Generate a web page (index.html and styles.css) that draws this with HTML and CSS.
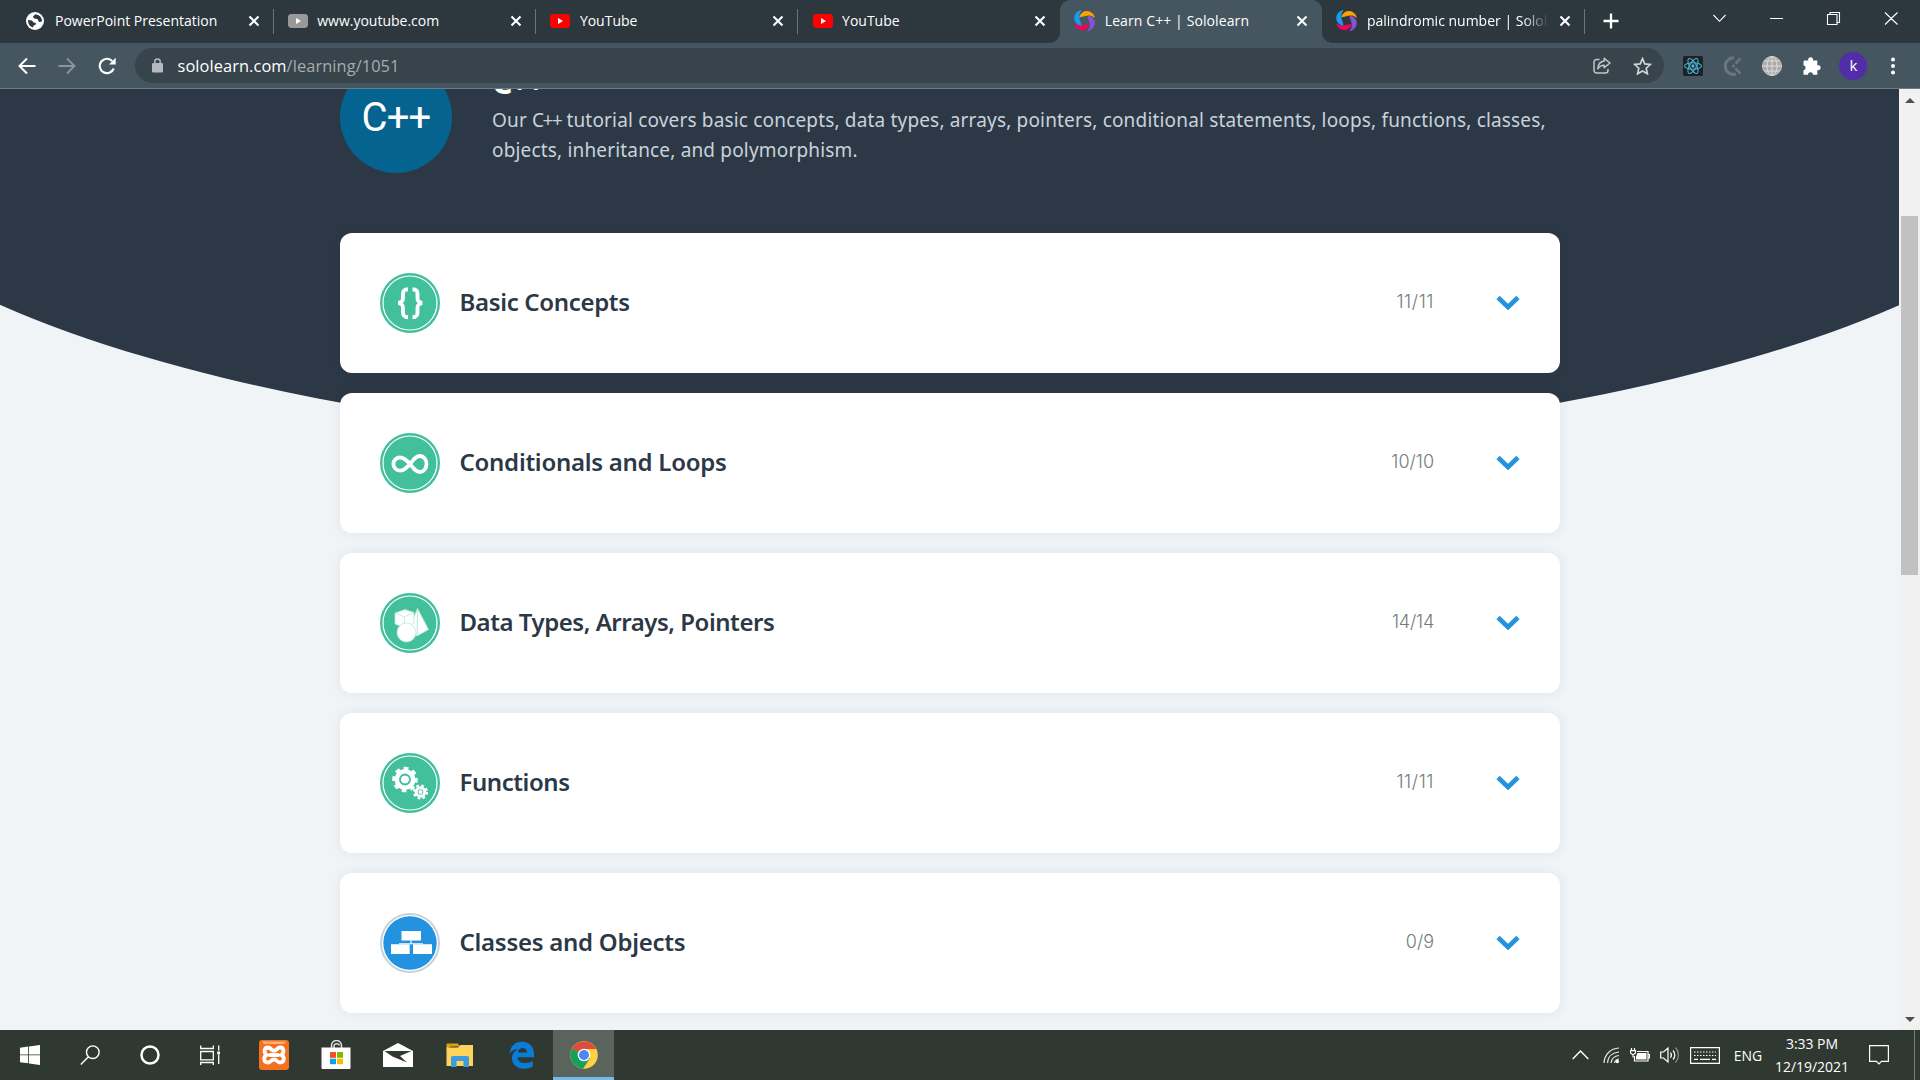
FILE: index.html
```html
<!DOCTYPE html>
<html lang="en">
<head>
<meta charset="utf-8">
<title>Learn C++ | Sololearn</title>
<link rel="stylesheet" href="styles.css">
</head>
<body>
<svg width="0" height="0" class="defs">
  <symbol id="close" viewBox="0 0 12 12"><path d="M1.5 1.5l9 9M10.5 1.5l-9 9" stroke="#fff" stroke-width="2.1" fill="none"/></symbol>
  <symbol id="yt" viewBox="0 0 20 14"><rect width="20" height="14" rx="3.4" fill="currentColor"/><path d="M8 4l5 3-5 3z" fill="#fff"/></symbol>
  <symbol id="solo" viewBox="0 0 22 22">
    <path d="M6 7.2C7.8 2 12.500 .4 17 2.300c2.200 1 3.700 3 4.200 5.300-2.500-2.200-5.200-2.600-8-2-2.600.4-4.200 1-7.200 1.600z" fill="#ffa200" stroke="#ffa200"/>
    <path d="M14.800 6.300C20.300 7.500 22.200 12 20.800 16.300c-.9 2.800-3 4.700-6 5.200 2.400-2.500 2.600-5.200 2-8-.5-2.700-1.800-4-2-7.200z" fill="#8553d9" stroke="#8553d9"/>
    <path d="M15.900 15.100C14.100 20.200 9.500 21.800 5 19.700 2.800 18.700 1.400 17 .8 14.600c2.500 2 5.200 2.500 8 1.900 2.600-.5 4.200-1 7.100-1.400z" fill="#f7005c" stroke="#f7005c"/>
    <path d="M7.200 16C1.700 14.700-.2 10.200 1.200 5.800 2.100 3 4.200 1 7.300.7 5 3.200 4.700 5.900 5.200 8.600c.5 2.700 1.800 4.200 2 7.400z" fill="#149ef2" stroke="#149ef2"/>
  </symbol>
  <symbol id="chev" viewBox="0 0 24 16"><path d="M2 2.500l10 9.500L22 2.500" stroke="#2493df" stroke-width="4.600" fill="none"/></symbol>
  <symbol id="ring" viewBox="0 0 60 60"><circle cx="30" cy="30" r="30" fill="#42bf9b"/><circle cx="30" cy="30" r="27" fill="none" stroke="#fff" stroke-width="1.200"/></symbol>
</svg>

<header class="tabs">
  <div class="tab">
    <svg class="fav" width="18" height="18" viewBox="0 0 18 18"><circle cx="9" cy="9" r="9" fill="#fff"/><path d="M9.500 2.200L7 4.500l1 2 3.500.5 1.500 3 3-.5a7 7 0 0 0-6.500-7.300zM2 8l4 .4 1.500 2.100 2.500.5-.6 2-1.900.4-.5 2.200A7 7 0 0 1 2 8z" fill="#2d373e"/></svg>
    <span class="name">PowerPoint Presentation</span><svg class="x" width="12" height="12"><use href="#close"/></svg>
  </div>
  <div class="tab"><svg class="fav gray" width="20" height="14"><use href="#yt"/></svg><span class="name">www.youtube.com</span><svg class="x" width="12" height="12"><use href="#close"/></svg></div>
  <div class="tab"><svg class="fav red" width="20" height="14"><use href="#yt"/></svg><span class="name">YouTube</span><svg class="x" width="12" height="12"><use href="#close"/></svg></div>
  <div class="tab last"><svg class="fav red" width="20" height="14"><use href="#yt"/></svg><span class="name">YouTube</span><svg class="x" width="12" height="12"><use href="#close"/></svg></div>
  <div class="tab active"><svg class="fav solo" width="21" height="21"><use href="#solo"/></svg><span class="name learn">Learn C++ | Sololearn</span><svg class="x" width="12" height="12"><use href="#close"/></svg></div>
  <div class="tab"><svg class="fav solo" width="21" height="21"><use href="#solo"/></svg><span class="name fade">palindromic number | Sololearn</span><svg class="x" width="12" height="12"><use href="#close"/></svg></div>
  <svg class="plus" width="16" height="16" viewBox="0 0 16 16"><path d="M8 .5v15M.5 8h15" stroke="#fff" stroke-width="2.300"/></svg>
  <svg class="window" width="190" height="20" viewBox="0 0 190 20" fill="none" stroke="#fff" stroke-width="1.100"><path d="M1.500 7l6 6.300 6-6.300M58 10.500h13"/><path d="M115.500 6.500h9.500v10h-9.500zM118 6.500v-2h9.500v10H125M173 4.500l12.500 12M185.500 4.500l-12.500 12"/></svg>
</header>

<nav class="toolbar">
  <svg width="18" height="18" viewBox="0 0 18 18" fill="none" stroke="#fff" stroke-width="2"><path d="M17.500 9H2M9 1.500L1.500 9 9 16.500"/></svg>
  <svg class="fwd" width="18" height="18" viewBox="0 0 18 18" fill="none" stroke="#8b969c" stroke-width="1.800"><path d="M.5 9H16M9 1.500L16.500 9 9 16.500"/></svg>
  <svg class="reload" width="18" height="18" viewBox="0 0 18 18"><path d="M15.700 11.500A7.200 7.200 0 1 1 14.200 4" stroke="#fff" stroke-width="2.200" fill="none"/><path d="M17.700.8V7.500H11z" fill="#fff"/></svg>
  <div class="omnibox">
    <svg width="11" height="15" viewBox="0 0 11 15"><rect y="5" width="11" height="9.500" rx="1.300" fill="#b5babe"/><path d="M2.800 6V3.700a2.700 2.700 0 0 1 5.400 0V6" stroke="#b5babe" stroke-width="1.500" fill="none"/></svg>
    <span class="url">sololearn.com<span class="path">/learning/1051</span></span>
    <svg width="18" height="17" viewBox="0 0 18 17" fill="none" stroke="#c0c5c8" stroke-width="1.500"><path d="M6.500 2.500H3.500a2.500 2.500 0 0 0-2.500 2.500v8.500A2.500 2.500 0 0 0 3.500 16h9a2.500 2.500 0 0 0 2.500-2.500V12"/><path d="M11.200 1.300L17 6l-5.800 4.700V8.200C8 8.200 6.200 9.500 4.800 11.800 5 7.500 7.500 4.500 11.200 4z" stroke-linejoin="round"/></svg>
    <svg class="star" width="19" height="18" viewBox="0 0 19 18"><path d="M9.500 1.700l2.300 5.200 5.600.5-4.200 3.800 1.200 5.600-4.900-2.900-4.900 2.900 1.200-5.600L1.600 7.400l5.600-.5z" fill="none" stroke="#d0d4d6" stroke-width="1.700"/></svg>
  </div>
  <div class="exts">
    <svg width="20" height="20" viewBox="0 0 20 20"><rect width="20" height="20" rx="1.500" fill="#202124"/><g fill="none" stroke="#48b5d8" stroke-width="1.100"><ellipse cx="10" cy="10" rx="8.500" ry="3.300"/><ellipse cx="10" cy="10" rx="8.500" ry="3.300" transform="rotate(60 10 10)"/><ellipse cx="10" cy="10" rx="8.500" ry="3.300" transform="rotate(120 10 10)"/></g><circle cx="10" cy="10" r="1.700" fill="#48b5d8"/></svg>
    <svg width="18" height="20" viewBox="0 0 18 20" fill="none" stroke="#697880" stroke-width="3"><path d="M10 1.800a8.300 8.300 0 1 0 2 16.200"/><path d="M16.500 2.500l-5 5M11.500 12.500l5 5" stroke-width="2.500"/><circle cx="9.500" cy="10" r="1.500" fill="#697880" stroke="none"/></svg>
    <svg width="20" height="20" viewBox="0 0 20 20"><circle cx="10" cy="10" r="9.500" fill="#aaa" stroke="#c8c8c8"/><path d="M10 .5v19M.5 10h19M2.500 5h15M2.500 15h15" stroke="#ddd" fill="none"/><ellipse cx="10" cy="10" rx="5" ry="9.500" stroke="#ddd" fill="none"/></svg>
    <svg width="18" height="18" viewBox="0 0 18 18"><path d="M1.800 3.500H5.200a2.500 2.500 0 1 1 4.800 0h4.300v4.800a2.500 2.500 0 1 1 0 4.700v4.700H10a2.500 2.500 0 0 0-5 0H.5v-4.400a2.600 2.600 0 0 0 0-5.100V4.800c0-.8.500-1.300 1.300-1.300z" fill="#fff"/></svg>
    <span class="avatar">k</span>
    <svg width="4" height="18" viewBox="0 0 4 18" fill="#fff"><circle cx="2" cy="2.500" r="2"/><circle cx="2" cy="9" r="2"/><circle cx="2" cy="15.500" r="2"/></svg>
  </div>
</nav>

<div class="view">
  <main class="page">
    <div class="dome"></div>
    <section class="course">
      <div class="logo">C++</div>
      <div class="about">
        <h1>C++</h1>
        <p>Our <span class="cpp">C++</span> tutorial covers basic concepts, data types, arrays, pointers, conditional statements, loops, functions, classes,<br>objects, inheritance, and polymorphism.</p>
      </div>
    </section>
    <section class="modules">
      <article class="card">
        <svg width="60" height="60" viewBox="0 0 60 60"><use href="#ring"/><path d="M28 16.300c-4 0-5 1.200-5 4.700v4c0 3-1 4.200-4.500 5 3.500.8 4.500 2 4.500 5v4.500c0 3.500 1 4.700 5 4.700M32.500 16.300c4 0 5 1.200 5 4.700v4c0 3 1 4.200 4.500 5-3.500.8-4.500 2-4.500 5v4.500c0 3.500-1 4.700-5 4.700" fill="none" stroke="#fff" stroke-width="3.900"/></svg>
        <h2>Basic Concepts</h2><span class="count ones">11/11</span><svg class="chev" width="24" height="16"><use href="#chev"/></svg>
      </article>
      <article class="card">
        <svg width="60" height="60" viewBox="0 0 60 60"><use href="#ring"/><path d="M30 31c-4-4.500-6.500-6.500-10-6.500a6.500 6.500 0 0 0 0 13.200c4 0 6.500-2.700 10-6.700 3.500-4.200 5.500-8 10-8 3.800 0 6.500 3.500 6.500 8s-2.700 8-6.500 8c-4.500 0-6.500-3.800-10-8z" fill="none" stroke="#fff" stroke-width="3.800"/></svg>
        <h2 class="loops">Conditionals and Loops</h2><span class="count">10/10</span><svg class="chev" width="24" height="16"><use href="#chev"/></svg>
      </article>
      <article class="card">
        <svg width="60" height="60" viewBox="0 0 60 60"><use href="#ring"/><g fill="#fff" stroke="#b9e8da" stroke-width=".8"><path d="M37.500 15.500L48.500 36.500 37 43z"/><path d="M37.500 15.500L29 36l8 7z"/><path d="M15 20l10-3.500 9 3V30l-9 5-10-4z"/><path d="M15 20l9.500 4L34 19.500M24.500 24v11" fill="none"/><circle cx="26.500" cy="39.500" r="9.500"/></g></svg>
        <h2 class="types">Data Types, Arrays, Pointers</h2><span class="count tight">14/14</span><svg class="chev" width="24" height="16"><use href="#chev"/></svg>
      </article>
      <article class="card">
        <svg width="60" height="60" viewBox="0 0 60 60"><use href="#ring"/>
          <g fill="none" stroke="#fff"><circle cx="25" cy="26.500" r="7.900" stroke-width="5.200"/><circle cx="25" cy="26.500" r="11.200" stroke-width="3.200" stroke-dasharray="4.600 4.197" transform="rotate(-8 25 26.500)"/><circle cx="40.500" cy="39" r="4.300" stroke-width="3"/><circle cx="40.500" cy="39" r="6.500" stroke-width="2.200" stroke-dasharray="2.700 2.405"/></g>
          <circle cx="25" cy="26.500" r="4.200" fill="#fff"/><circle cx="25" cy="26.500" r="5" fill="none" stroke="#42bf9b" stroke-width="1.800"/><circle cx="40.500" cy="39" r="2" fill="#fff"/>
        </svg>
        <h2 class="fn">Functions</h2><span class="count ones">11/11</span><svg class="chev" width="24" height="16"><use href="#chev"/></svg>
      </article>
      <article class="card">
        <svg width="60" height="60" viewBox="0 0 60 60"><circle cx="30" cy="30" r="29" fill="#fff" stroke="#c8d2db" stroke-width="2"/><circle cx="30" cy="30" r="26.700" fill="#2493df"/><path d="M21.500 18h19.500v9.500H21.500zM11 31.300H29.700V41H11zM33 31.300H52V41H33z" fill="#fff"/><path d="M19 30.800h24M31 27v4" stroke="#fff" stroke-width="1.100"/></svg>
        <h2 class="loops">Classes and Objects</h2><span class="count">0/9</span><svg class="chev" width="24" height="16"><use href="#chev"/></svg>
      </article>
    </section>
  </main>
  <aside class="scroll">
    <svg width="10" height="5" viewBox="0 0 10 5"><path d="M5 0l5 5H0z" fill="#505050"/></svg>
    <div class="thumb"></div>
    <svg class="down" width="10" height="5" viewBox="0 0 10 5"><path d="M0 0h10L5 5z" fill="#505050"/></svg>
  </aside>
</div>

<footer class="taskbar">
  <div class="apps">
    <span><svg width="20" height="20" viewBox="0 0 20 20" fill="#fff"><path d="M0 2.700l8.200-1.200v8H0zM9 1.400L20 0v9.500H9zM0 10.300h8.200v8L0 17.200zM9 10.300h11V20L9 18.500z"/></svg></span>
    <span><svg width="20" height="20" viewBox="0 0 20 20" fill="none" stroke="#fff" stroke-width="1.400"><circle cx="12.800" cy="7.200" r="6.300"/><path d="M8.500 11.700L.8 19.500"/></svg></span>
    <span><svg width="20" height="20" viewBox="0 0 20 20"><circle cx="10" cy="10" r="8.500" fill="none" stroke="#fff" stroke-width="2.500"/></svg></span>
    <span><svg width="20" height="20" viewBox="0 0 20 20" fill="none" stroke="#fff" stroke-width="1.300"><path d="M.7.5v3h12.600v-3M.7 6.500h12.600v8.300H.7zM.7 20v-2.500h12.600V20M18.700.5v5M18.700 10v9"/><path d="M17.200 6.500h3v3h-3z" fill="#fff" stroke="none"/></svg></span>
    <span class="wide"><svg width="30" height="30" viewBox="0 0 30 30"><rect width="30" height="30" rx="3" fill="#f37021"/><path d="M3 1.500h24l-2 2.500H5z" fill="#ffb27a"/><path d="M9 7.500c-4 0-4.500 5-1.500 7.500C4 17 4.500 22.500 9 22.500c3 0 3-3 6-3s3 3 6 3c4.500 0 5-5.500 1.500-7.500 3-2.500 2.500-7.500-1.500-7.500-3 0-3 3.200-6 3.200s-3-3.200-6-3.200zM11 15h8" fill="none" stroke="#fff" stroke-width="3.800" stroke-linecap="round"/></svg></span>
    <span class="wide"><svg width="30" height="30" viewBox="0 0 30 30"><path d="M10.500 9V5.500a5 5 0 0 1 10 0V9M13 9V5.500a3 3 0 0 1 5.500 0" fill="none" stroke="#ddd" stroke-width="1.500"/><path d="M.5 7.500h29V28a1 1 0 0 1-1 1h-27a1 1 0 0 1-1-1z" fill="#fff"/><path d="M9 12h6v5.800H9z" fill="#f25022"/><path d="M16 12h6v5.800h-6z" fill="#7fba00"/><path d="M9 18.700h6v5.500H9z" fill="#00a4ef"/><path d="M16 18.700h6v5.500h-6z" fill="#ffb900"/></svg></span>
    <span class="wide"><svg width="30" height="24" viewBox="0 0 30 24"><path d="M0 8L15 0l15 8v16H0z" fill="#fff"/><path d="M1.500 8h27L17 13l7 6.500L9.500 13.500z" fill="#303931"/></svg></span>
    <span class="wide"><svg width="28" height="24" viewBox="0 0 28 24"><path d="M.5 1.500a1 1 0 0 1 1-1H12l2 3H5L.5 6z" fill="#e0a00e"/><path d="M.5 4.500H12L14.500 2H27v21H.5z" fill="#ffd35a"/><path d="M5 24V15a2 2 0 0 1 2-2h14a2 2 0 0 1 2 2v9h-5.500v-6h-7v6z" fill="#3d9be0"/></svg></span>
    <span class="wide"><svg width="26" height="28" viewBox="0 0 26 28"><path d="M.5 12.300C1.500 5.300 6 .8 13 .8c7.500 0 12 5.200 12 12v3.400H8.500c.2 4 3.500 5.800 7.500 5.800 3 0 5.500-.8 7.700-2.200v5.700c-2.500 1.500-5.500 2.200-8.700 2.200C8 27.700 3 23.500 3 17.500c0-4.500 2.500-7.800 6.500-9.700C6 8.200 2.800 9.500.5 12.300zM8.700 11.500H18C18 8.800 16.500 7 13.700 7c-2.700 0-4.500 1.800-5 4.500z" fill="#0a7cd8"/></svg></span>
    <span class="wide on"><svg width="28" height="28" viewBox="0 0 28 28"><circle cx="14" cy="14" r="13.800" fill="#ffd042"/><path d="M14 14L2 7.200a13.800 13.800 0 0 0 11 20.600l7-10.500z" fill="#1a9e5b"/><path d="M14 14L2 7.200A13.800 13.800 0 0 1 26.200 8H14z" fill="#dd4b3e"/><circle cx="14" cy="14" r="6.300" fill="#fff"/><circle cx="14" cy="14" r="5" fill="#4b87ee"/></svg></span>
  </div>
  <div class="tray">
    <svg width="17" height="10" viewBox="0 0 17 10" fill="none" stroke="#fff" stroke-width="1.400"><path d="M.7 9l7.800-8 7.800 8"/></svg>
    <svg class="wifi" width="17" height="17" viewBox="0 0 17 17" fill="none" stroke="#e8e8e8" stroke-width="1.200"><path d="M1 16C1.500 7.500 7.500 1.500 16 1M4.500 16C5 9.500 9.500 5.500 16 5M8 16c.5-4 3.500-7 8-7.500M11.500 16c.3-2 2-3.700 4.500-4"/><circle cx="14.300" cy="14.500" r="1.800" fill="#fff" stroke="none"/></svg>
    <svg class="bat" width="20" height="15" viewBox="0 0 20 15" fill="none" stroke="#fff" stroke-width="1.200"><path d="M7 3.500h11v9.500H4.500V8M18.500 6.500h1v3.500h-1M1.500 0v2.500M4.500 0v2.500M.5 2.700h5V5L3 7 .5 5zM3 7v2.500"/><path d="M7.500 5h9v6.500H6V8.500z" fill="#fff" stroke="none"/></svg>
    <svg class="vol" width="20" height="18" viewBox="0 0 20 18" fill="none" stroke="#fff" stroke-width="1.200"><path d="M.7 6h2.800L8 2v14l-4.500-4H.7zM10.500 6.500a4 4 0 0 1 0 5M13 4.500a6.500 6.500 0 0 1 0 9"/><path d="M15.500 1.500a11 11 0 0 1 0 15" stroke="#8c938d"/></svg>
    <svg class="kb" width="30" height="17" viewBox="0 0 30 17" fill="none" stroke="#fff" stroke-width="1.200"><path d="M.6.600h28.800v15.800H.6z"/><path d="M4 5h22M4 8.500h22" stroke-dasharray="1.500 1.500"/><path d="M4 12.300h4M10 12.300h10M22 12.300h4"/></svg>
    <span class="eng">ENG</span>
    <div class="clock">3:33 PM<br>12/19/2021</div>
    <svg class="note" width="20" height="20" viewBox="0 0 20 20" fill="none" stroke="#fff" stroke-width="1.200"><path d="M.6.600h18.800v15.800h-6.900L10 19l-2.500-2.600H.6z"/></svg>
    <i class="peek"></i>
  </div>
</footer>
</body>
</html>
```
FILE: styles.css
```css
* { box-sizing: border-box; }
body { margin: 0; width: 1920px; height: 1080px; overflow: hidden; display: flex; flex-direction: column; font-family: "Open Sans", sans-serif; }
svg { display: block; flex: none; }
.defs { position: absolute; }

/* Browser tabs */
.tabs { height: 43px; background: #2d373e; display: flex; padding-left: 11px; color: #fff; font-size: 14px; }
.tab { width: 262.200px; height: 43px; display: flex; align-items: center; padding: 0 13.500px 2px 15px; position: relative; }
.tab:not(.active):not(.last)::after { content: ""; position: absolute; right: -.500px; top: 9px; width: 1px; height: 25px; background: #68757c; }
.tab .name { flex: 1; margin-left: 11px; overflow: hidden; white-space: nowrap; line-height: 24px; }
.tab .learn { letter-spacing: .100px; }
.tab .x { margin-left: 10px; margin-top: 1px; }
.tab .gray { color: #999; margin-right: -2px; }
.tab .red { color: #f00; margin-right: -1.500px; }
.tab .solo { margin: 0 -1.500px 0 -.500px; }
.fade { -webkit-mask-image: linear-gradient(90deg, #000 calc(100% - 26px), transparent); mask-image: linear-gradient(90deg, #000 calc(100% - 26px), transparent); }
.active { background: #455660; border-radius: 10px 10px 0 0; }
.active::before, .active::after { content: ""; position: absolute; bottom: 0; width: 10px; height: 10px; }
.active::before { left: -10px; background: radial-gradient(circle at 0 0, transparent 9.500px, #455660 10px); }
.active::after { right: -10px; background: radial-gradient(circle at 100% 0, transparent 9.500px, #455660 10px); }
.plus { margin: 13px 0 0 19px; }
.window { margin: 8px 18px 0 auto; }

/* Toolbar */
.toolbar { height: 46px; background: #455660; border-bottom: 1px solid #6b7c85; display: flex; align-items: center; padding: 0 25px 0 18px; }
.fwd { margin-left: 22px; }
.reload { margin-left: 22px; }
.omnibox { width: 1529px; height: 35px; border-radius: 18px; background: #38444b; margin-left: 19px; display: flex; align-items: center; padding: 0 12px 0 17px; }
.url { flex: 1; color: #fff; font-size: 16.400px; margin-left: 14.500px; line-height: 30px; letter-spacing: .080px; }
.path { color: #a5acb0; }
.star { margin-left: 22px; }
.exts { flex: 1; display: flex; align-items: center; justify-content: space-between; margin-left: 19px; }
.avatar { width: 28px; height: 28px; border-radius: 50%; background: #512da8; color: #fff; font-size: 15px; line-height: 27px; text-align: center; margin: 0 3px 0 -2px; }

/* Page */
.view { height: 941px; display: flex; background: #f0f4f7; }
.page { width: 1899px; height: 941px; overflow: hidden; position: relative; padding: 0 339px 0 340px; font-family: "Noto Sans", sans-serif; }
.dome { position: absolute; left: -190px; top: -306px; width: 2280px; height: 672px; border-radius: 50%; background: #2d3846; }
.course { height: 144px; display: flex; position: relative; }
.logo { width: 112px; height: 112px; border-radius: 50%; background: #056390; margin-top: -28px; color: #fff; font: 40px/114px Roboto, sans-serif; text-align: center; letter-spacing: -.800px; }
.about { margin: -37px 0 0 40px; }
h1 { margin: 0 0 -3px; padding-top: 3px; font-size: 32px; line-height: 53px; font-weight: 700; color: #fff; letter-spacing: -2px; }
.about p { margin: 0; font-size: 19px; line-height: 30px; letter-spacing: .170px; color: #c8d2db; white-space: nowrap; }
.cpp { letter-spacing: -1.500px; }
.modules { display: flex; flex-direction: column; gap: 20px; position: relative; }
.card { height: 140px; flex: none; background: #fff; border-radius: 12px; box-shadow: 0 0 12px rgba(45, 56, 70, .08); display: flex; align-items: center; padding: 0 40px; }
h2 { margin: 0 0 2px 19.500px; flex: 1; font-size: 24px; font-weight: 600; line-height: 36px; letter-spacing: -.330px; color: #2d3846; }
h2.loops { letter-spacing: -.270px; }
h2.types { letter-spacing: -.470px; }
h2.fn { letter-spacing: -.450px; }
.count { font: 300 18px/28px Inter, sans-serif; color: #737c7b; margin: 0 61.500px 2px 0; }
.count.ones { letter-spacing: .600px; }
.count.tight { letter-spacing: -.200px; }
.chev { margin-right: .500px; }
.scroll { width: 21px; background: #f1f1f1; display: flex; flex-direction: column; align-items: center; padding: 9px 0; }
.thumb { width: 17px; height: 359px; margin-top: 113px; background: #c1c1c1; }
.down { margin-top: auto; margin-bottom: -1px; }

/* Taskbar */
.taskbar { height: 50px; background: #303931; display: flex; justify-content: space-between; color: #fff; font-size: 14px; }
.apps { display: flex; }
.apps span { width: 60px; height: 50px; display: flex; align-items: center; justify-content: center; }
.apps .wide { width: 62px; }
.apps .wide:nth-child(5) { margin-left: 3px; }
.apps .on { width: 61px; background: #5b645c; border-bottom: 3px solid #76b9ed; padding-top: 2px; }
.tray { display: flex; align-items: center; }
.wifi { margin-left: 14px; }
.bat { margin-left: 10px; }
.vol { margin-left: 10px; }
.kb { margin-left: 10px; }
.eng { margin-left: 14px; letter-spacing: -.100px; }
.clock { margin-left: 11px; width: 78px; text-align: center; line-height: 23px; letter-spacing: -.050px; }
.note { margin-left: 18px; }
.peek { width: 1px; height: 50px; background: #78807a; margin: 0 5px 0 25px; }
```
